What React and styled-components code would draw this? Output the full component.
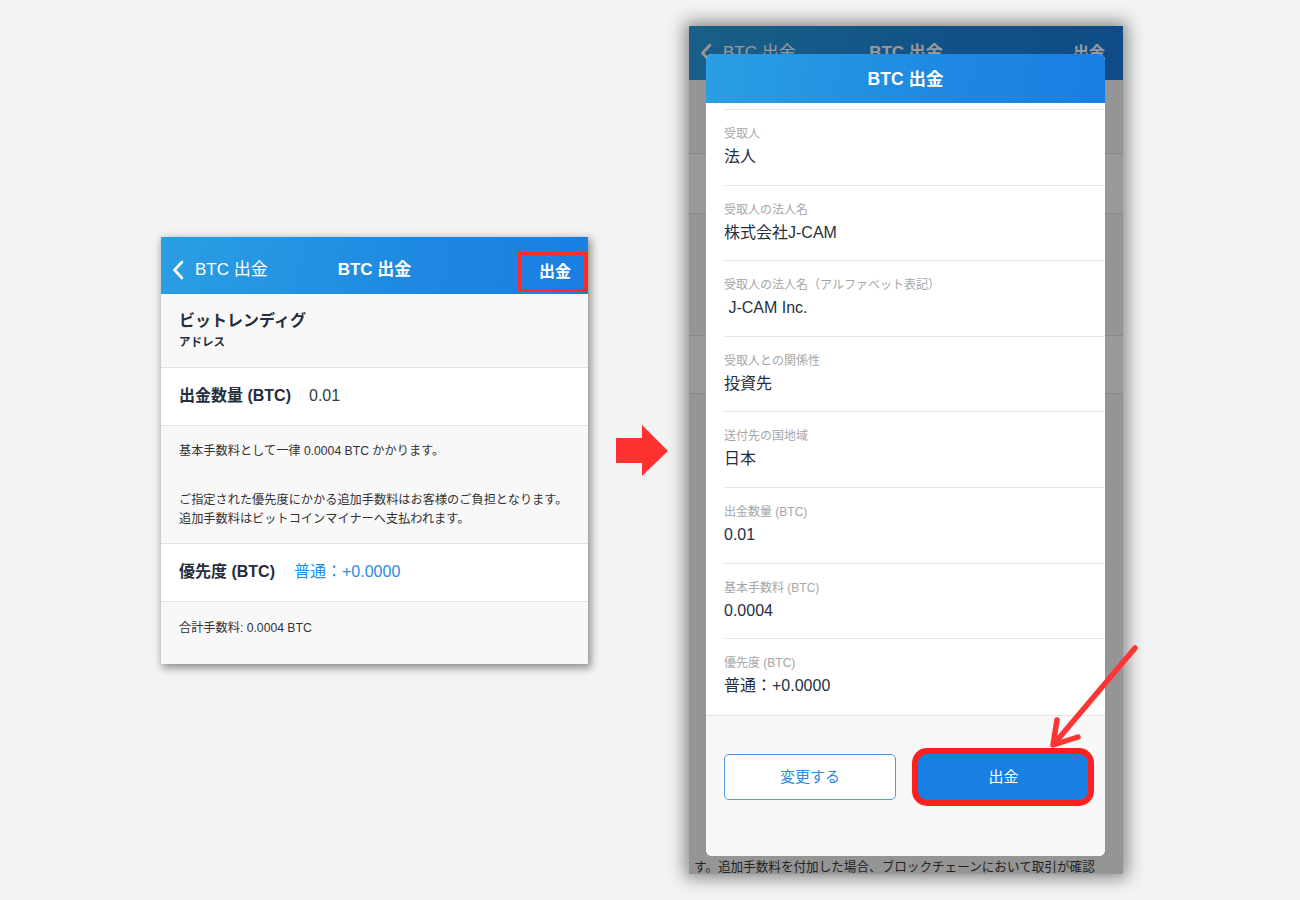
import React from "react";
import styled, { createGlobalStyle } from "styled-components";

const FONT = `"Liberation Sans", "Noto Sans CJK JP", sans-serif`;

const Global = createGlobalStyle`
  html, body { margin: 0; padding: 0; background: #f3f3f3; }
  body { font-family: ${FONT}; -webkit-font-smoothing: antialiased; }
  * { box-sizing: border-box; }
`;

const Stage = styled.div`
  position: relative;
  width: 1300px;
  height: 900px;
  display: flex;
  align-items: center;
  padding-left: 161px;
  background: #f3f3f3;
`;

const Phone = styled.div`
  position: relative;
  width: ${(p) => p.$w}px;
  height: ${(p) => p.$h}px;
  background: #f8f8f8;
  display: flex;
  flex-direction: column;
  overflow: hidden;
  flex-shrink: 0;
  box-shadow: ${(p) =>
    p.$big
      ? "0 0 16px 4px rgba(0,0,0,0.45)"
      : "2px 3px 8px 1px rgba(0,0,0,0.42)"};
`;

const NavBar = styled.div`
  height: ${(p) => p.$h}px;
  flex-shrink: 0;
  display: grid;
  grid-template-columns: 1fr auto 1fr;
  align-items: center;
  padding-top: ${(p) => p.$pt || 0}px;
  background: linear-gradient(100deg, #2b9fe3 0%, #1e88e2 60%, #1a7ee2 100%);
  color: #fff;
`;

const BackLink = styled.div`
  display: flex;
  align-items: center;
  gap: 11px;
  padding-left: 11px;
  font-size: 17px;
  line-height: 22px;
`;

const NavTitle = styled.div`
  font-size: 17px;
  font-weight: 700;
  line-height: 22px;
  text-align: center;
`;

const NavAction = styled.div`
  justify-self: end;
  display: flex;
  align-items: center;
  justify-content: center;
  font-size: 16px;
  font-weight: 700;
  line-height: 22px;
  ${(p) =>
    p.$marked
      ? `
    width: 69px;
    height: 40px;
    align-self: end;
    margin-bottom: 2px;
    margin-right: 1px;
    border: 3px solid #ff2b2b;
    padding: 1px 0 0 5px;
  `
      : `
    padding-right: 18px;
  `}
`;

const Section = styled.div`
  flex-shrink: 0;
  height: ${(p) => p.$h}px;
  background: ${(p) => (p.$white ? "#ffffff" : "#f8f8f8")};
  border-bottom: ${(p) => (p.$last ? "none" : "1px solid #e3e3e3")};
  padding: 0 18px;
  display: flex;
  flex-direction: ${(p) => (p.$column ? "column" : "row")};
  align-items: ${(p) => (p.$column ? "flex-start" : "center")};
  padding-top: ${(p) => (p.$pt ? `${p.$pt}px` : "0")};
`;

const RowTitle = styled.div`
  font-size: 16px;
  font-weight: 700;
  line-height: 22px;
  color: #262e3c;
  margin-right: ${(p) => p.$gap || 0}px;
`;

const RowSub = styled.div`
  font-size: 11.5px;
  font-weight: 700;
  line-height: 16px;
  color: #262e3c;
  margin-top: 2px;
`;

const RowValue = styled.div`
  font-size: 16px;
  line-height: 22px;
  color: ${(p) => (p.$accent ? "#2a8be6" : "#333a46")};
`;

const Note = styled.p`
  margin: 0;
  font-size: 12.2px;
  line-height: 19px;
  color: #333;
  & + & {
    margin-top: 30px;
  }
`;

const ArrowWrap = styled.div`
  width: 52px;
  height: 52px;
  margin: 0 21px 0 28px;
  flex-shrink: 0;
`;

const Underlay = styled.div`
  flex: 1;
  display: flex;
  flex-direction: column;
`;

const Filler = styled.div`
  flex: 1;
  background: #f8f8f8;
  display: flex;
  align-items: flex-end;
  padding: 0 0 0 5px;
`;

const FinePrint = styled.div`
  font-size: 12.6px;
  line-height: 18px;
  color: #3a3a3a;
  white-space: nowrap;
  margin-bottom: -2px;
`;

const Dim = styled.div`
  position: absolute;
  inset: 0;
  background: rgba(0, 0, 0, 0.4);
`;

const Modal = styled.div`
  position: absolute;
  top: 28px;
  left: 17px;
  width: 399px;
  bottom: 18px;
  border-radius: 6px;
  overflow: hidden;
  background: #fff;
  display: flex;
  flex-direction: column;
`;

const ModalHeader = styled.div`
  height: 49px;
  flex-shrink: 0;
  display: flex;
  align-items: center;
  justify-content: center;
  background: linear-gradient(100deg, #2b9fe3 0%, #1e88e2 60%, #1a7ee2 100%);
  color: #fff;
  font-size: 17.5px;
  font-weight: 700;
  line-height: 22px;
`;

const ModalBody = styled.div`
  flex: 1;
  padding-top: 6px;
  display: flex;
  flex-direction: column;
`;

const ScrollEdge = styled.div`
  margin-left: 18px;
  border-top: 1px solid #e6e6e6;
`;

const DetailItem = styled.div`
  height: 75.6px;
  flex-shrink: 0;
  margin-left: 18px;
  padding-top: 16px;
  border-bottom: ${(p) => (p.$last ? "none" : "1px solid #e6e6e6")};
`;

const DetailLabel = styled.div`
  font-size: 12px;
  line-height: 17px;
  color: #a6a6a6;
`;

const DetailValue = styled.div`
  margin-top: 3px;
  font-size: 16px;
  line-height: 22px;
  color: #26303f;
  white-space: pre;
`;

const ModalFooter = styled.div`
  height: 141px;
  flex-shrink: 0;
  border-top: 1px solid #e4e4e4;
  background: #f8f8f8;
  display: grid;
  grid-template-columns: 172px 170px;
  column-gap: 22px;
  align-items: start;
  padding: 38px 17px 0 18px;
`;

const Button = styled.button`
  height: 46px;
  font-family: ${FONT};
  font-size: 15px;
  line-height: 20px;
  cursor: pointer;
  ${(p) =>
    p.$primary
      ? `
    background: #1a7fe2;
    color: #fff;
    border: none;
    border-radius: 9px;
    box-shadow: 0 0 0 6px #ff1f1f;
    padding-right: 5px;
  `
      : `
    background: #fff;
    color: #2a8ae6;
    border: 1px solid #4a9be9;
    border-radius: 5px;
  `}
`;

const Pointer = styled.svg`
  position: absolute;
  left: 1040px;
  top: 638px;
  pointer-events: none;
`;

const Chevron = () => (
  <svg width="12" height="20" viewBox="0 0 12 20">
    <path d="M10 2 L2.5 10 L10 18" fill="none" stroke="#fff" strokeWidth="2.6" strokeLinecap="round" strokeLinejoin="round" />
  </svg>
);

const Header = ({ h, pt, marked }) => (
  <NavBar $h={h} $pt={pt}>
    <BackLink>
      <Chevron />
      <span>BTC 出金</span>
    </BackLink>
    <NavTitle>BTC 出金</NavTitle>
    <NavAction $marked={marked}>出金</NavAction>
  </NavBar>
);

const details = [
  ["受取人", "法人"],
  ["受取人の法人名", "株式会社J-CAM"],
  ["受取人の法人名（アルファベット表記）", " J-CAM Inc."],
  ["受取人との関係性", "投資先"],
  ["送付先の国地域", "日本"],
  ["出金数量 (BTC)", "0.01"],
  ["基本手数料 (BTC)", "0.0004"],
  ["優先度 (BTC)", "普通：+0.0000"],
];

export default function App() {
  return (
    <>
      <Global />
      <Stage>
        <Phone $w={427} $h={427}>
          <Header h={57} pt={10} marked />
          <Section $h={74} $column $pt={16}>
            <RowTitle>ビットレンディグ</RowTitle>
            <RowSub>アドレス</RowSub>
          </Section>
          <Section $h={58} $white>
            <RowTitle $gap={18}>出金数量 (BTC)</RowTitle>
            <RowValue>0.01</RowValue>
          </Section>
          <Section $h={118} $column $pt={16}>
            <Note>基本手数料として一律 0.0004 BTC かかります。</Note>
            <Note>
              ご指定された優先度にかかる追加手数料はお客様のご負担となります。
              <br />
              追加手数料はビットコインマイナーへ支払われます。
            </Note>
          </Section>
          <Section $h={58} $white>
            <RowTitle $gap={19}>優先度 (BTC)</RowTitle>
            <RowValue $accent>普通：+0.0000</RowValue>
          </Section>
          <Section $h={62} $column $pt={17} $last>
            <Note>合計手数料: 0.0004 BTC</Note>
          </Section>
        </Phone>

        <ArrowWrap>
          <svg width="52" height="52" viewBox="0 0 52 52">
            <polygon points="0,14 26,14 26,1 52,27 26,52 26,39 0,39" fill="#ff3131" />
          </svg>
        </ArrowWrap>

        <Phone $w={434} $h={848} $big>
          <Underlay>
            <Header h={54} />
            <Section $h={74} />
            <Section $h={60} $white />
            <Section $h={122} />
            <Section $h={58} $white />
            <Filler>
              <FinePrint>す。追加手数料を付加した場合、ブロックチェーンにおいて取引が確認</FinePrint>
            </Filler>
          </Underlay>
          <Dim />
          <Modal>
            <ModalHeader>BTC 出金</ModalHeader>
            <ModalBody>
              <ScrollEdge />
              {details.map(([label, value], i) => (
                <DetailItem key={label} $last={i === details.length - 1}>
                  <DetailLabel>{label}</DetailLabel>
                  <DetailValue>{value}</DetailValue>
                </DetailItem>
              ))}
            </ModalBody>
            <ModalFooter>
              <Button>変更する</Button>
              <Button $primary>出金</Button>
            </ModalFooter>
          </Modal>
        </Phone>

        <Pointer width="110" height="120" viewBox="0 0 110 120">
          <g fill="none" stroke="#ff3535" strokeWidth="5.5" strokeLinecap="round" strokeLinejoin="round">
            <path d="M95 10 L14 106" />
            <path d="M17 82 L13 107 L38 99" />
          </g>
        </Pointer>
      </Stage>
    </>
  );
}
